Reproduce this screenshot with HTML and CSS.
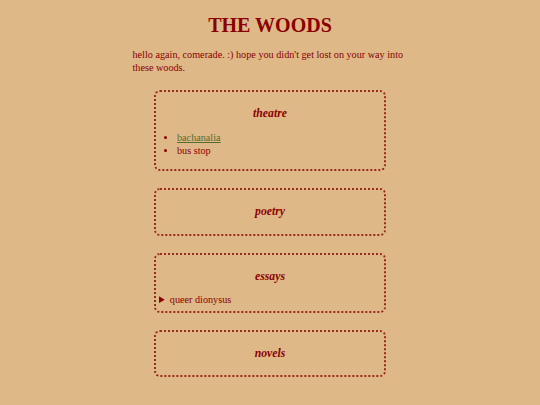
FILE: index.html
```html
<!DOCTYPE html>
<html>
<head>
<meta charset="utf-8">
<title>the woods</title>
<link rel="stylesheet" href="styles.css">
</head>
<body>
<div class="page">
  <h1 class="title">THE WOODS</h1>
  <p class="intro">hello again, comerade. :) hope you didn't get lost on your way into these woods.</p>

  <section class="box">
    <h3 class="box-title">theatre</h3>
    <ul class="list">
      <li><a href="#" class="link">bachanalia</a></li>
      <li>bus stop</li>
    </ul>
  </section>

  <section class="box">
    <h3 class="box-title">poetry</h3>
  </section>

  <section class="box">
    <h3 class="box-title">essays</h3>
    <details class="item">
      <summary>queer dionysus</summary>
    </details>
  </section>

  <section class="box">
    <h3 class="box-title">novels</h3>
  </section>
</div>
</body>
</html>
```

FILE: styles.css
```css
html, body {
  margin: 0;
  padding: 0;
}

body {
  background: #deb887;
  color: #8b0000;
  font-family: "Liberation Serif", "Times New Roman", serif;
  font-size: 10.2px;
  line-height: 12.7px;
}

.page {
  width: 275px;
  margin: 0 auto;
  padding-top: 14px;
}

.title {
  font-size: 20px;
  line-height: 23px;
  font-weight: bold;
  text-align: center;
  margin: 0 0 12px;
}

.intro {
  margin: 0 0 16px;
}

.box {
  width: 222px;
  margin: 0 auto 17px;
  border: 2px dotted #9a2a1c;
  border-radius: 6px;
  padding: 8px 3px 4px 3px;
}

.box-title {
  font-size: 11.7px;
  line-height: 13.4px;
  font-style: italic;
  font-weight: bold;
  text-align: center;
  margin: 7px 0 11px;
}

.list {
  margin: 10px 0 8px;
  padding-left: 18px;
}

.link {
  color: #556b2f;
}

.item summary {
  cursor: pointer;
}
```
